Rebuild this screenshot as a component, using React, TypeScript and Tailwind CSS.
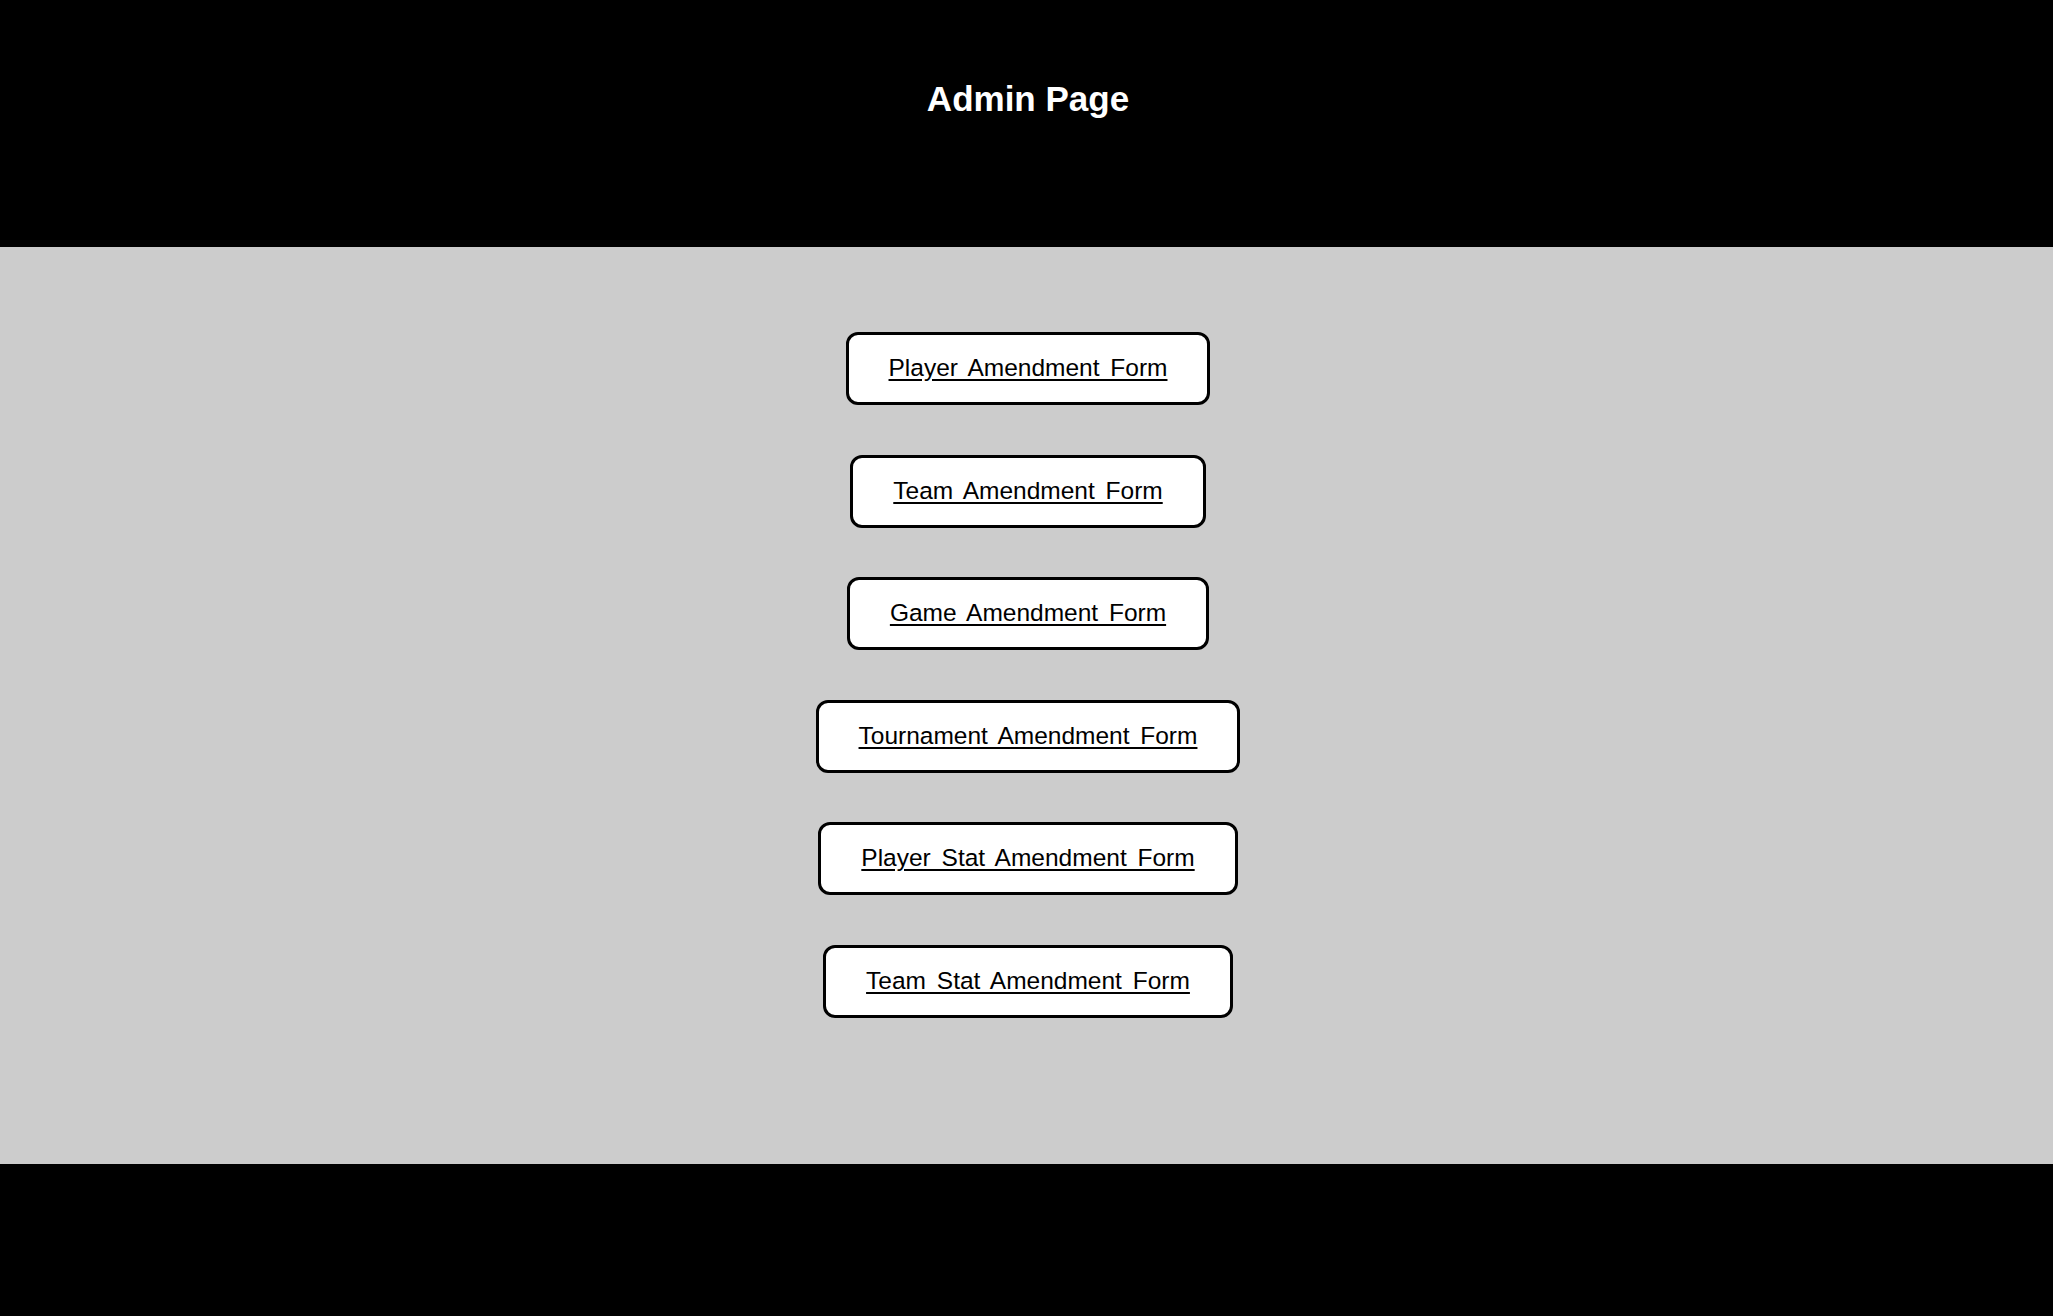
const forms = [
    'Player Amendment Form',
    'Team Amendment Form',
    'Game Amendment Form',
    'Tournament Amendment Form',
    'Player Stat Amendment Form',
    'Team Stat Amendment Form',
];

export default function App() {
    return (
        <div className="min-h-screen flex flex-col bg-black" style={{ fontFamily: '"Liberation Sans", Arial, sans-serif' }}>
            {/* Header */}
            <header className="h-[247px] bg-black pt-[78px] pl-[3px] text-center">
                <h1 className="text-[35px] leading-[41px] font-bold text-white">Admin Page</h1>
            </header>

            {/* Links */}
            <main className="h-[917px] bg-[#cccccc] pt-[85px] pl-[3px] flex flex-col items-center gap-[49.5px]">
                {forms.map((form) => (
                    <a
                        key={form}
                        href="#"
                        className="h-[73px] flex items-center px-[40px] bg-white border-[3px] border-black rounded-[12px] text-[24.5px] [word-spacing:4px] text-black underline underline-offset-[3px]"
                    >
                        {form}
                    </a>
                ))}
            </main>

            {/* Footer */}
            <footer className="flex-1 bg-black min-h-[152px]" />
        </div>
    );
}
